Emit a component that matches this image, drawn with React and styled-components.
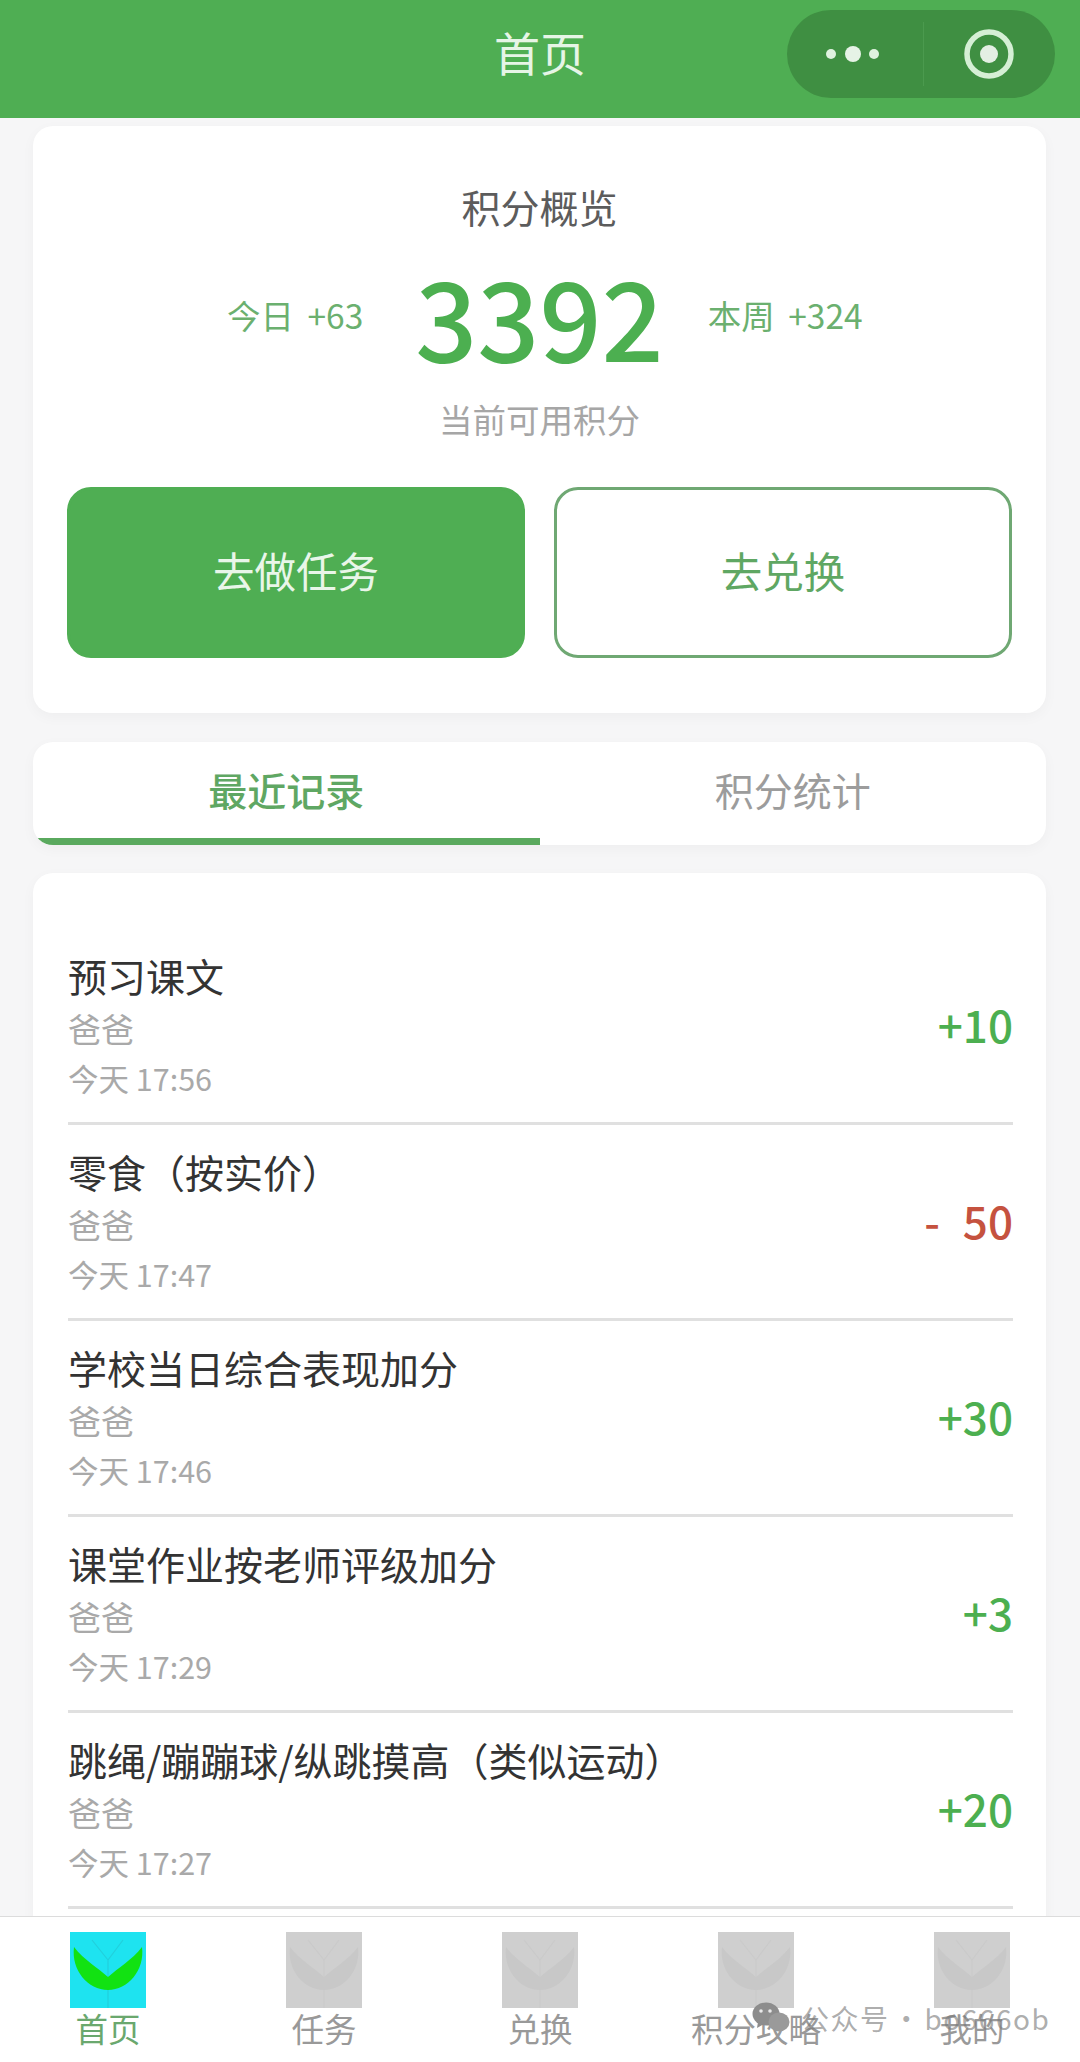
import styled, { createGlobalStyle } from 'styled-components';

const GlobalStyle = createGlobalStyle`
  html, body {
    margin: 0;
    padding: 0;
    background: #f6f6f7;
  }
  * {
    box-sizing: border-box;
  }
`;

const Page = styled.div`
  position: relative;
  display: flex;
  flex-direction: column;
  width: 1080px;
  height: 2062px;
  overflow: hidden;
  font-family: "Noto Sans CJK SC", "Noto Sans", sans-serif;
  background: #f6f6f7;
`;

const Header = styled.header`
  position: relative;
  flex: none;
  display: flex;
  align-items: center;
  justify-content: flex-end;
  height: 118px;
  padding: 0 25px 10px 0;
  background: #4fae53;
`;

const HeaderTitle = styled.h1`
  position: absolute;
  left: 0;
  right: 0;
  top: 21px;
  margin: 0;
  text-align: center;
  font-size: 46px;
  line-height: 60px;
  font-weight: 400;
  color: #e6f5e6;
`;

const Capsule = styled.div`
  display: flex;
  align-items: center;
  width: 268px;
  height: 88px;
  border-radius: 44px;
  background: #3f8f42;
`;

const CapsuleHalf = styled.div`
  flex: 1;
  display: flex;
  align-items: center;
  justify-content: center;
  height: 64px;
  padding-right: ${(p) => (p.$left ? '4px' : '0')};
  border-right: ${(p) => (p.$left ? '1px solid #4b9a4e' : 'none')};
`;

const Main = styled.main`
  flex: 1;
  min-height: 0;
  overflow: hidden;
  padding: 8px 34px 0 33px;
`;

const Card = styled.section`
  background: #fff;
  border-radius: 20px;
  box-shadow: 0 4px 14px rgba(0, 0, 0, 0.035);
`;

const Overview = styled(Card)`
  padding: 54px 34px 55px 34px;
`;

const OverviewTitle = styled.div`
  text-align: center;
  font-size: 39px;
  line-height: 52px;
  color: #5c5c5c;
`;

const ScoreRow = styled.div`
  display: grid;
  grid-template-columns: 1fr auto 1fr;
  align-items: center;
  margin-top: 23px;
`;

const ScoreSide = styled.div`
  padding: ${(p) => (p.$right ? '0 0 0 44px' : '0 52px 0 0')};
  text-align: ${(p) => (p.$right ? 'left' : 'right')};
  font-size: 33.5px;
  line-height: 44px;
  word-spacing: 6px;
  white-space: nowrap;
  color: #6bb06f;
`;

const ScoreValue = styled.div`
  font-size: 109px;
  line-height: 120px;
  font-weight: 500;
  color: #4caf50;
`;

const ScoreCaption = styled.div`
  margin-top: 22px;
  text-align: center;
  font-size: 33.5px;
  line-height: 44px;
  color: #a6a6a6;
`;

const Actions = styled.div`
  display: grid;
  grid-template-columns: 458px 458px;
  justify-content: space-between;
  margin-top: 46px;
`;

const ActionButton = styled.button`
  height: 171px;
  padding: 0 0 5px;
  border-radius: 24px;
  border: 3px solid ${(p) => (p.$primary ? '#4fae53' : '#6fa873')};
  background: ${(p) => (p.$primary ? '#4fae53' : '#fff')};
  color: ${(p) => (p.$primary ? '#e9f6e9' : '#5fa763')};
  font-family: inherit;
  font-size: 41.5px;
`;

const Tabs = styled(Card)`
  display: flex;
  height: 103px;
  margin-top: 29px;
  overflow: hidden;
`;

const Tab = styled.div`
  flex: 1;
  display: flex;
  align-items: center;
  justify-content: center;
  padding-bottom: 3px;
  border-bottom: 7px solid ${(p) => (p.$active ? '#5aa95e' : 'transparent')};
  font-size: 39px;
  font-weight: ${(p) => (p.$active ? 500 : 400)};
  color: ${(p) => (p.$active ? '#5fa763' : '#9c9c9c')};
`;

const RecordList = styled(Card)`
  margin-top: 28px;
  padding: 56px 33px 120px 35px;
`;

const Row = styled.div`
  display: flex;
  align-items: center;
  justify-content: space-between;
  height: 196px;
  padding: 21px 0 24px;
  border-bottom: 3px solid #e0e0e0;
`;

const RowName = styled.div`
  font-size: 39px;
  line-height: 52px;
  color: #333;
`;

const RowMeta = styled.div`
  margin-top: ${(p) => p.$gap}px;
  font-size: ${(p) => p.$size}px;
  line-height: 44px;
  color: #a9a9a9;
`;

const Amount = styled.div`
  font-size: 44px;
  line-height: 52px;
  font-weight: 500;
  word-spacing: 13px;
  color: ${(p) => (p.$minus ? '#c5523f' : '#4caf50')};
`;

const TabBar = styled.nav`
  flex: none;
  display: grid;
  grid-template-columns: repeat(5, 216px);
  height: 146px;
  padding-top: 15px;
  border-top: 1px solid #dcdcdc;
  background: #fff;
`;

const TabItem = styled.div`
  display: flex;
  flex-direction: column;
  align-items: center;
  font-size: 32.5px;
  line-height: 40px;
  color: ${(p) => (p.$active ? '#6aa86e' : '#999')};
`;

const TabIconBox = styled.svg`
  display: block;
  width: 76px;
  height: 76px;
`;

const Watermark = styled.div`
  position: absolute;
  left: 752px;
  top: 2002px;
  display: flex;
  align-items: center;
  gap: 11px;
  font-size: 28px;
  line-height: 32px;
  letter-spacing: 1.5px;
  word-spacing: -5px;
  white-space: nowrap;
  color: rgba(120, 120, 120, 0.62);
`;

const records = [
  { name: '预习课文', time: '今天 17:56', amount: '+10' },
  { name: '零食（按实价）', time: '今天 17:47', amount: '- 50', minus: true },
  { name: '学校当日综合表现加分', time: '今天 17:46', amount: '+30' },
  { name: '课堂作业按老师评级加分', time: '今天 17:29', amount: '+3' },
  { name: '跳绳/蹦蹦球/纵跳摸高（类似运动）', time: '今天 17:27', amount: '+20' },
];

const navItems = ['首页', '任务', '兑换', '积分攻略', '我的'];

const LeafIcon = ({ active }) => {
  const bg = active ? '#1ee3f0' : '#cfcfcf';
  const leaf = active ? '#12e212' : '#c8c8c8';
  const stem = active ? '#22cfdc' : '#cacaca';
  return (
    <TabIconBox viewBox="0 0 76 76">
      <rect width="76" height="76" fill={bg} />
      <path d="M38 76V28M38 28L22 8M38 28L53 8" stroke={stem} strokeWidth="1.2" fill="none" />
      <path d="M4 15C14 28 28 36 38 45C48 36 62 28 72 15C75 38 58 58 38 58C18 58 1 38 4 15Z" fill={leaf} />
    </TabIconBox>
  );
};

const MoreIcon = () => (
  <svg width="60" height="20" viewBox="0 0 60 20">
    <circle cx="8" cy="10" r="5" fill="#dff2df" />
    <circle cx="30" cy="10" r="8" fill="#e6f3e6" />
    <circle cx="51" cy="10" r="5" fill="#dff2df" />
  </svg>
);

const TargetIcon = () => (
  <svg width="50" height="50" viewBox="0 0 50 50">
    <circle cx="25" cy="25" r="22" fill="none" stroke="#d5efd5" strokeWidth="5.5" />
    <circle cx="25" cy="25" r="9" fill="#e3efe3" />
  </svg>
);

const WechatMark = () => (
  <svg width="38" height="32" viewBox="0 0 38 32">
    <ellipse cx="14" cy="12" rx="13.5" ry="11.5" fill="#8d8d8d" />
    <path d="M6 20L5 26L12 22Z" fill="#8d8d8d" />
    <ellipse cx="27" cy="20" rx="10.5" ry="9.5" fill="#9a9a9a" />
    <circle cx="9" cy="9" r="1.8" fill="#e8e8e8" />
    <circle cx="18" cy="9" r="1.8" fill="#e8e8e8" />
  </svg>
);

const App = () => (
  <Page>
    <GlobalStyle />
    <Header>
      <HeaderTitle>首页</HeaderTitle>
      <Capsule>
        <CapsuleHalf $left><MoreIcon /></CapsuleHalf>
        <CapsuleHalf><TargetIcon /></CapsuleHalf>
      </Capsule>
    </Header>

    <Main>
      <Overview>
        <OverviewTitle>积分概览</OverviewTitle>
        <ScoreRow>
          <ScoreSide>今日 +63</ScoreSide>
          <ScoreValue>3392</ScoreValue>
          <ScoreSide $right>本周 +324</ScoreSide>
        </ScoreRow>
        <ScoreCaption>当前可用积分</ScoreCaption>
        <Actions>
          <ActionButton $primary>去做任务</ActionButton>
          <ActionButton>去兑换</ActionButton>
        </Actions>
      </Overview>

      <Tabs>
        <Tab $active>最近记录</Tab>
        <Tab>积分统计</Tab>
      </Tabs>

      <RecordList>
        {records.map((r) => (
          <Row key={r.name}>
            <div>
              <RowName>{r.name}</RowName>
              <RowMeta $size={33} $gap={5}>爸爸</RowMeta>
              <RowMeta $size={30.5} $gap={6}>{r.time}</RowMeta>
            </div>
            <Amount $minus={r.minus}>{r.amount}</Amount>
          </Row>
        ))}
      </RecordList>
    </Main>

    <TabBar>
      {navItems.map((label, i) => (
        <TabItem key={label} $active={i === 0}>
          <LeafIcon active={i === 0} />
          {label}
        </TabItem>
      ))}
    </TabBar>

    <Watermark>
      <WechatMark />
      <span>公众号 · bo666ob</span>
    </Watermark>
  </Page>
);

export default App;
